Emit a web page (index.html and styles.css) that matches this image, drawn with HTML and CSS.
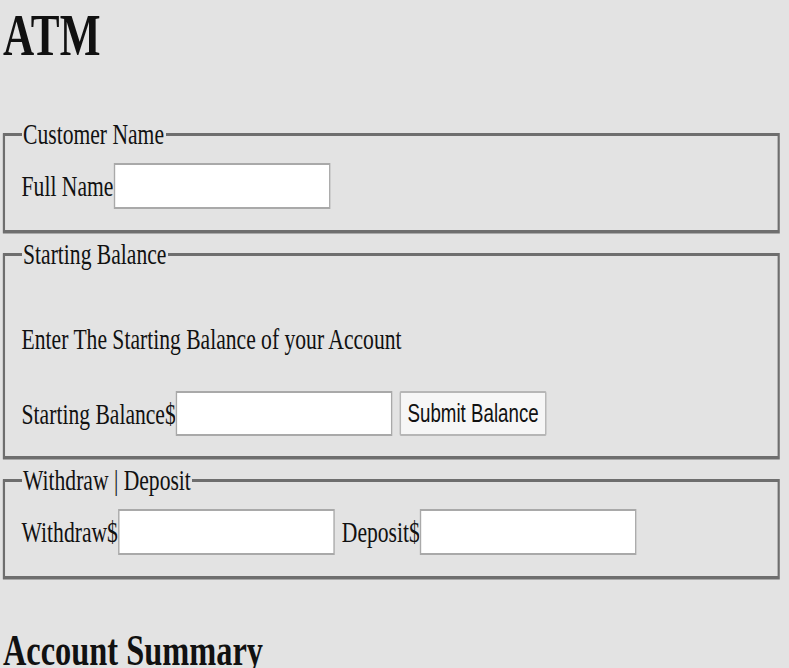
FILE: index.html
```html
<!DOCTYPE html>
<html lang="en">
<head>
<meta charset="utf-8">
<title>ATM</title>
<link rel="stylesheet" href="styles.css">
</head>
<body>
<div class="page">
  <h1 class="title">ATM</h1>
  <form class="atm">
    <fieldset class="group group-name">
      <legend class="group-legend">Customer Name</legend>
      <div class="row">
        <label class="label" for="fullname">Full Name</label><input class="field" id="fullname" type="text">
      </div>
    </fieldset>
    <fieldset class="group group-balance">
      <legend class="group-legend">Starting Balance</legend>
      <p class="hint">Enter The Starting Balance of your Account</p>
      <div class="row">
        <label class="label" for="start">Starting Balance$</label><input class="field" id="start" type="text"><button class="btn" type="button">Submit Balance</button>
      </div>
    </fieldset>
    <fieldset class="group group-trans">
      <legend class="group-legend">Withdraw | Deposit</legend>
      <div class="row">
        <label class="label" for="withdraw">Withdraw$</label><input class="field" id="withdraw" type="text"><label class="label label-gap" for="deposit">Deposit$</label><input class="field" id="deposit" type="text">
      </div>
    </fieldset>
  </form>
  <h2 class="summary">Account Summary</h2>
</div>
</body>
</html>
```
FILE: styles.css
```css
html, body {
  margin: 0;
  padding: 0;
  background: #e3e3e3;
}
html {
  overflow: hidden;
}
body {
  overflow: hidden;
}
.page {
  width: 1096px;
  box-sizing: border-box;
  padding: 0 13px 0 4px;
  transform: scaleX(0.72);
  transform-origin: 0 0;
  font-family: "Liberation Serif", "Times New Roman", serif;
  font-size: 30px;
  color: #111;
}
.title {
  font-size: 60px;
  line-height: 70px;
  font-weight: bold;
  margin: 0 0 47px;
}
.atm {
  margin: 0;
}
.group {
  margin: 0 0 4px;
  min-width: 0;
  border: 3px solid #6e6e6e;
  box-shadow: 0 1px 0 #a9a9a9;
  padding: 12px 20px 20px 23px;
}
.group-name {
  padding-bottom: 21px;
}
.group-trans {
  padding-bottom: 21px;
}
.group-legend {
  padding: 0 2px;
  font-size: 30px;
  line-height: 34px;
}
.hint {
  margin: 39px 0 35px;
  line-height: 34px;
}
.row {
  display: flex;
  align-items: center;
}
.label {
  line-height: 34px;
  white-space: nowrap;
}
.label-gap {
  margin-left: 10px;
}
.field {
  box-sizing: border-box;
  width: 301px;
  height: 46px;
  margin: 0;
  padding: 0 4px;
  background: #fff;
  border: 2px solid #a9a9a9;
  font: inherit;
}
.group-balance .field {
  height: 45px;
}
.btn {
  box-sizing: border-box;
  width: 204px;
  height: 45px;
  margin: 0 0 0 10px;
  padding: 0;
  background: #f6f6f6;
  border: 2px solid #b6b6b6;
  border-radius: 2px;
  font-family: "Liberation Sans", Arial, sans-serif;
  font-size: 26px;
  color: #111;
}
.summary {
  font-size: 45px;
  line-height: 52px;
  font-weight: bold;
  margin: 45px 0 0;
}
```
